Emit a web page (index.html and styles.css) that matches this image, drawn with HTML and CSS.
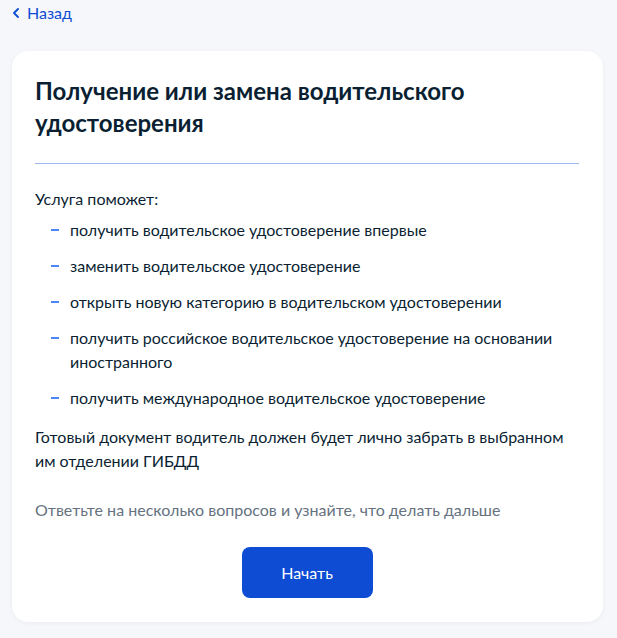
FILE: index.html
```html
<!DOCTYPE html>
<html lang="ru">
<head>
  <meta charset="UTF-8">
  <title>Получение или замена водительского удостоверения</title>
  <link rel="stylesheet" href="styles.css">
</head>
<body>
  <div class="page">
    <a class="back" href="#">
      <svg class="back-icon" width="8" height="10" viewBox="0 0 8 10"><path d="M6 1L2 5l4 4" fill="none" stroke="#0d4cd3" stroke-width="1.8" stroke-linecap="round" stroke-linejoin="round"/></svg>
      Назад
    </a>

    <div class="card">
      <h1>Получение или замена водительского удостоверения</h1>
      <div class="divider"></div>

      <p class="lead">Услуга поможет:</p>
      <ul class="list">
        <li>получить водительское удостоверение впервые</li>
        <li>заменить водительское удостоверение</li>
        <li>открыть новую категорию в водительском удостоверении</li>
        <li>получить российское водительское удостоверение на основании иностранного</li>
        <li>получить международное водительское удостоверение</li>
      </ul>
      <p class="note">Готовый документ водитель должен будет лично забрать в выбранном им отделении ГИБДД</p>

      <p class="hint">Ответьте на несколько вопросов и узнайте, что делать дальше</p>

      <div class="actions">
        <button class="btn">Начать</button>
      </div>
    </div>
  </div>
</body>
</html>
```

FILE: styles.css
```css
body {
  margin: 0;
  background-color: #f5f7fb;
  font-family: Lato, "Noto Sans", sans-serif;
  color: #0b1f33;
}

.page {
  padding: 2px 14px 16px 12px;
}

.back {
  display: inline-flex;
  align-items: center;
  gap: 7px;
  color: #0d4cd3;
  text-decoration: none;
  font-size: 16px;
  line-height: 20px;
}

.back-icon {
  display: block;
}

.card {
  margin-top: 28px;
  background-color: #fff;
  border-radius: 16px;
  padding: 24px 24px 24px 23px;
  box-shadow: 0 1px 4px rgba(0, 0, 0, 0.05);
}

h1 {
  margin: 0;
  font-size: 24px;
  line-height: 32px;
  font-weight: 700;
  color: #0b1f33;
}

.divider {
  margin-top: 24px;
  height: 1px;
  background-color: #9db7ef;
}

.lead,
.note,
.hint,
.list li {
  font-size: 16px;
  line-height: 24px;
}

.lead {
  margin: 23px 0 0;
}

.list {
  list-style: none;
  margin: 7px 0 0;
  padding: 0;
}

.list li {
  position: relative;
  padding-left: 35px;
  margin-bottom: 12px;
}

.list li::before {
  content: "";
  position: absolute;
  left: 16px;
  top: 11px;
  width: 8px;
  height: 2px;
  background-color: #4d86fb;
}

/* li margin collapses into this one */
.note {
  margin: 15px 0 0;
}

.hint {
  margin: 25px 0 0;
  color: #66727f;
}

.actions {
  display: flex;
  justify-content: center;
  margin-top: 25px;
}

.btn {
  width: 131px;
  height: 51px;
  border: none;
  border-radius: 8px;
  background-color: #0d4cd3;
  color: #fff;
  font-family: Lato, "Noto Sans", sans-serif;
  font-size: 16px;
  cursor: pointer;
}
```
